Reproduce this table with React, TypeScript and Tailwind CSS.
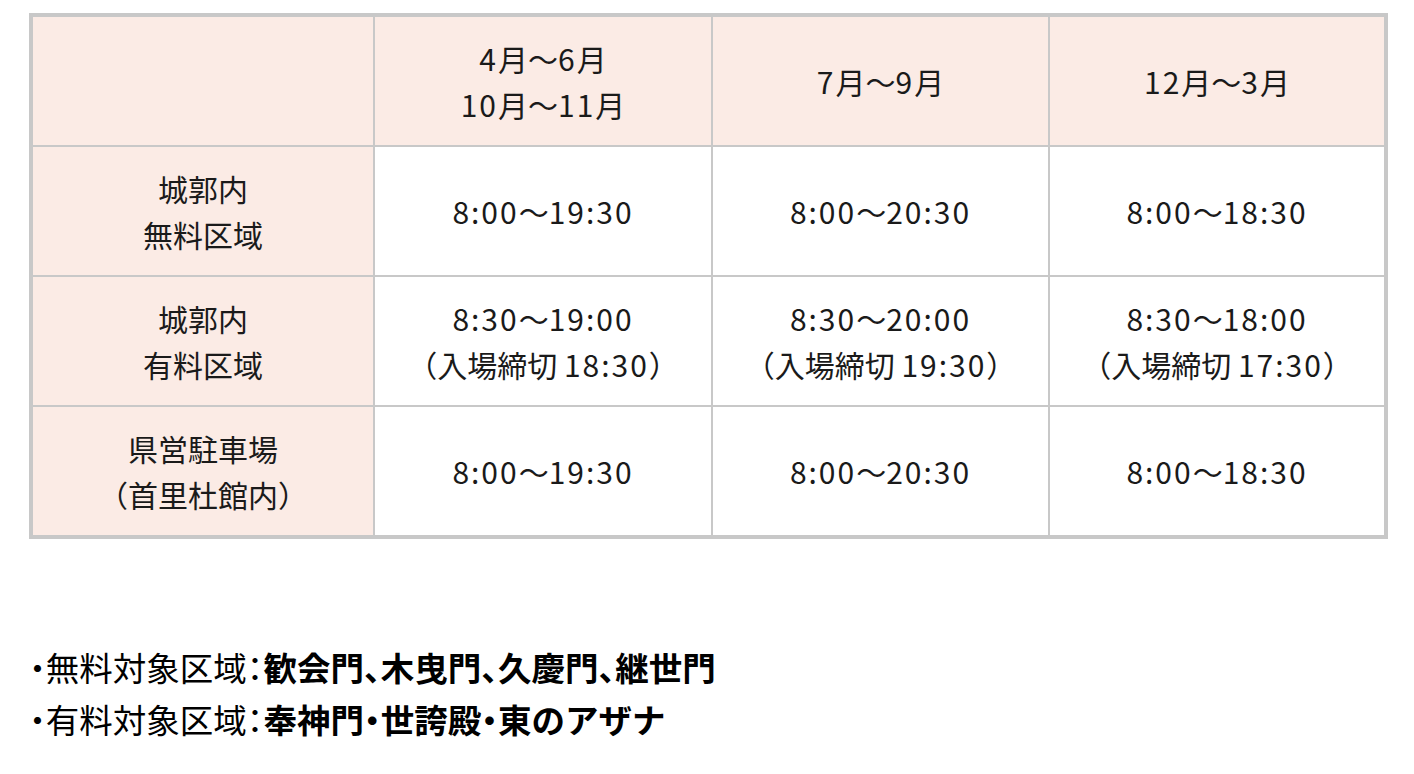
import React from "react";

const font = { fontFamily: '"Noto Sans CJK JP", "Noto Sans", sans-serif' };

function Txt({ s }: { s: string }) {
  const parts = s.split(/([0-9:]+)/);
  return (
    <div>
      {parts.map((p, i) =>
        /^[0-9:]+$/.test(p) ? (
          <span key={i} className="tracking-[2px]">
            {p}
          </span>
        ) : (
          <span key={i}>{p}</span>
        )
      )}
    </div>
  );
}

function Cell({ lines, head }: { lines: string[]; head?: boolean }) {
  return (
    <div
      className={`flex flex-col items-center justify-center text-center text-[30px] leading-[46px] text-[#1a1a1a] ${
        head ? "bg-[#fbebe5]" : "bg-white"
      }`}
    >
      {lines.map((l, i) => (
        <Txt key={i} s={l} />
      ))}
    </div>
  );
}

export default function App() {
  const rows: { label: string[]; cells: string[][] }[] = [
    {
      label: ["城郭内", "無料区域"],
      cells: [["8:00～19:30"], ["8:00～20:30"], ["8:00～18:30"]],
    },
    {
      label: ["城郭内", "有料区域"],
      cells: [
        ["8:30～19:00", "（入場締切 18:30）"],
        ["8:30～20:00", "（入場締切 19:30）"],
        ["8:30～18:00", "（入場締切 17:30）"],
      ],
    },
    {
      label: ["県営駐車場", "（首里杜館内）"],
      cells: [["8:00～19:30"], ["8:00～20:30"], ["8:00～18:30"]],
    },
  ];
  return (
    <div className="min-h-screen bg-white" style={font}>
      <div className="pl-[29px] pt-[13px]">
        <div className="w-[1359px] border-4 border-[#c8c8c8] bg-[#c8c8c8] grid grid-cols-[340px_336px_335px_334px] grid-rows-[128px_128px_128px_128px] gap-[2px]">
          <Cell head lines={[]} />
          <Cell head lines={["4月～6月", "10月～11月"]} />
          <Cell head lines={["7月～9月"]} />
          <Cell head lines={["12月～3月"]} />
          {rows.map((r, i) => (
            <React.Fragment key={i}>
              <Cell head lines={r.label} />
              {r.cells.map((c, k) => (
                <Cell key={k} lines={c} />
              ))}
            </React.Fragment>
          ))}
        </div>
      </div>
      <div className="pl-[29px] pt-[102px] text-[33.5px] leading-[52px] text-black [font-feature-settings:'halt']">
        <div>
          ・無料対象区域：<span className="font-bold">歓会門、木曳門、久慶門、継世門</span>
        </div>
        <div>
          ・有料対象区域：<span className="font-bold">奉神門・世誇殿・東のアザナ</span>
        </div>
      </div>
    </div>
  );
}
